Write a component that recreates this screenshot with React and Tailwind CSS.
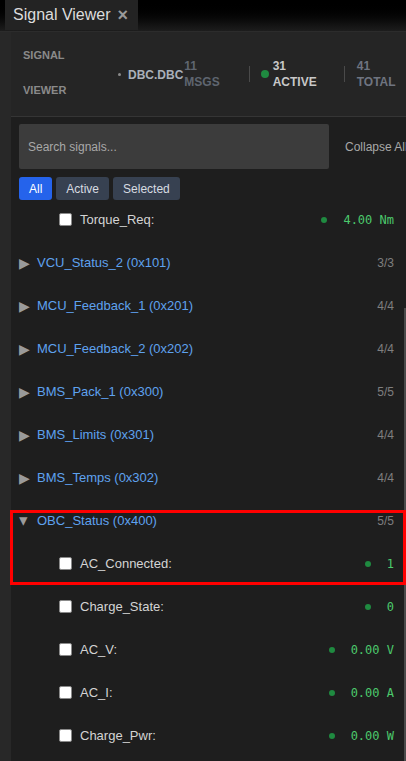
import React from "react";

const groups = [
  ["VCU_Status_2 (0x101)", "3/3"],
  ["MCU_Feedback_1 (0x201)", "4/4"],
  ["MCU_Feedback_2 (0x202)", "4/4"],
  ["BMS_Pack_1 (0x300)", "5/5"],
  ["BMS_Limits (0x301)", "4/4"],
  ["BMS_Temps (0x302)", "4/4"],
];

const obc = [
  ["AC_Connected:", "1"],
  ["Charge_State:", "0"],
  ["AC_V:", "0.00 V"],
  ["AC_I:", "0.00 A"],
  ["Charge_Pwr:", "0.00 W"],
];

function Checkbox() {
  return <div className="w-[13px] h-[13px] bg-white rounded-[2px] border border-[#8a8a8a] shrink-0" />;
}

function SignalRow({ name, value }) {
  return (
    <div className="h-[43px] flex items-center pl-[48px] pr-[12px]">
      <Checkbox />
      <span className="ml-[8px] text-[13px] text-[#d4d4d4]">{name}</span>
      <div className="flex-1" />
      <div className="w-[6px] h-[6px] rounded-full bg-[#1f8a40]" />
      <span
        className="ml-[16px] text-[12px] text-[#4cc96c]"
        style={{ fontFamily: '"DejaVu Sans Mono", monospace' }}
      >
        {value}
      </span>
    </div>
  );
}

function GroupRow({ name, count, open }) {
  return (
    <div className="h-[43px] flex items-center pl-[8px] pr-[12px]">
      {open ? (
        <span className="w-[18px] text-[17px] leading-none text-[#9a9a9a]">▾</span>
      ) : (
        <span className="w-[18px] text-[14px] leading-none text-[#9a9a9a]">▶</span>
      )}
      <span className="text-[13px] text-[#5ea2ef]">{name}</span>
      <div className="flex-1" />
      <span className="text-[12px] text-[#7f7f7f]">{count}</span>
    </div>
  );
}

export default function App() {
  return (
    <div
      className="relative w-[406px] h-[761px] overflow-hidden bg-[#1e1e1e] flex flex-col"
      style={{ fontFamily: '"Liberation Sans", Arial, sans-serif' }}
    >
      <div className="h-[32px] shrink-0 bg-gradient-to-b from-[#000000] to-[#1d1d1d] flex items-end border-b border-[#2c2c2c]">
        <div className="ml-[5px] h-[30px] pl-[8px] pr-[10px] bg-[#232323] flex items-center gap-[7px] mb-[1px]">
          <span className="text-[16px] text-[#dcdcdc]">Signal Viewer</span>
          <span className="text-[18px] text-[#9a9a9a] font-bold leading-none">×</span>
        </div>
      </div>
      <div className="flex flex-1 min-h-0">
        <div className="w-[11px] shrink-0 bg-[#282828]" />
        <div className="flex-1 min-w-0 flex flex-col overflow-hidden">
          <div className="h-[85px] shrink-0 bg-[#252525] border-b border-[#353535] flex items-center pl-[12px]">
            <div className="w-[95px] text-[11px] font-bold text-[#8a8a8a] leading-[35px] mt-[-2px]">
              SIGNAL
              <br />
              VIEWER
            </div>
            <div className="w-[3px] h-[3px] rounded-full bg-[#8a8a8a]" />
            <span className="ml-[7px] text-[12px] font-bold text-[#aab0ba] mt-[1px]">DBC.DBC</span>
            <div className="ml-[1px] flex flex-col text-[12px] font-bold text-[#5f6570] leading-[16px] mt-[-1px]">
              <span>11</span>
              <span>MSGS</span>
            </div>
            <div className="ml-[29px] w-px h-[16px] bg-[#4a4a4a]" />
            <div className="ml-[11px] w-[8px] h-[8px] rounded-full bg-[#1f8a40]" />
            <div className="ml-[4px] flex flex-col text-[12px] font-bold text-[#c8c8c8] leading-[16px] mt-[-1px]">
              <span>31</span>
              <span>ACTIVE</span>
            </div>
            <div className="ml-[27px] w-px h-[16px] bg-[#4a4a4a]" />
            <div className="ml-[12px] flex flex-col text-[12px] font-bold text-[#6f7480] leading-[16px] mt-[-1px]">
              <span>41</span>
              <span>TOTAL</span>
            </div>
          </div>
          <div className="px-[8px] pt-[7px] flex items-center gap-[16px] whitespace-nowrap">
            <div className="w-[310px] shrink-0 h-[45px] bg-[#3c3c3c] rounded-[2px] flex items-center pl-[9px] text-[12px] text-[#a8a8a8]">
              Search signals...
            </div>
            <span className="text-[12px] text-[#a8a8a8]">Collapse All</span>
          </div>
          <div className="px-[8px] mt-[8px] flex gap-[4px]">
            <div className="h-[23px] px-[10px] rounded-[3px] bg-[#2563eb] text-white text-[12px] flex items-center">All</div>
            <div className="h-[23px] px-[10px] rounded-[3px] bg-[#374151] text-[#d8dce2] text-[12px] flex items-center">Active</div>
            <div className="h-[23px] px-[10px] rounded-[3px] bg-[#374151] text-[#d8dce2] text-[12px] flex items-center">Selected</div>
          </div>
          <div className="flex-1 min-h-0 overflow-hidden">
            <div className="mt-[-2px]">
              <SignalRow name="Torque_Req:" value="4.00 Nm" />
              {groups.map(([n, c]) => (
                <GroupRow key={n} name={n} count={c} />
              ))}
              <GroupRow name="OBC_Status (0x400)" count="5/5" open />
              {obc.map(([n, v]) => (
                <SignalRow key={n} name={n} value={v} />
              ))}
            </div>
          </div>
        </div>
      </div>
      <div className="absolute right-0 top-[308px] w-[2px] h-[453px] bg-[#4a4a4a]" />
      <div className="absolute left-[10px] top-[510px] w-[396px] h-[75px] border-[3px] border-[#ff0000]" />
    </div>
  );
}
